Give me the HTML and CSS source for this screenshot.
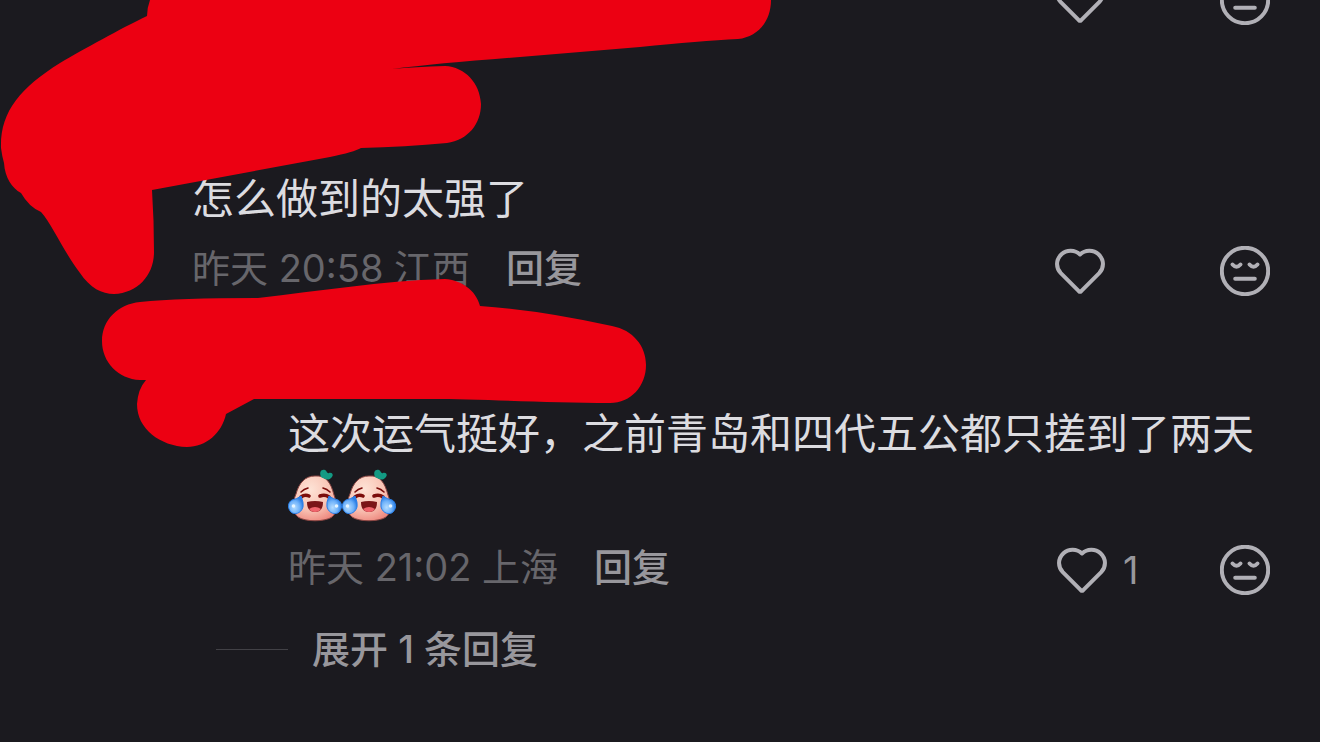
FILE: index.html
```
<!DOCTYPE html>
<html lang="zh-CN">
<head>
    <meta charset="UTF-8">
    <meta name="viewport" content="width=device-width, initial-scale=1.0">
    <title>评论</title>
    <link rel="stylesheet" href="styles.css">
</head>
<body>
    <!-- Iconos compartidos -->
    <svg class="sprite" aria-hidden="true">
        <defs>
            <radialGradient id="skin" cx="0.4" cy="0.3" r="0.75">
                <stop offset="0" stop-color="#fde3d6"/>
                <stop offset="0.6" stop-color="#f9c4b5"/>
                <stop offset="1" stop-color="#ee8a80"/>
            </radialGradient>
            <radialGradient id="tear" cx="0.4" cy="0.65" r="0.6">
                <stop offset="0" stop-color="#b4dcff"/>
                <stop offset="0.6" stop-color="#6fb2fa"/>
                <stop offset="1" stop-color="#2b7fe6"/>
            </radialGradient>
        </defs>
        <symbol id="heart" viewBox="0 0 50 50">
            <path d="M25 8.500C20 3.600 11.500 3.400 6.500 8.300C0.800 13.800 0.600 21.500 5.800 27.200L23.800 45.200Q25 46.300 26.200 45.200L44.200 27.200C49.400 21.500 49.200 13.800 43.500 8.300C38.500 3.400 30 3.600 25 8.500Z"/>
        </symbol>
        <symbol id="face" viewBox="0 0 50 50">
            <circle cx="25" cy="25" r="23.200"/>
            <path d="M12.500 18.500Q16.500 23 20.500 18.500M29.500 18.500Q33.500 23 37.500 18.500M15.200 32.700H34.800"/>
        </symbol>
        <symbol id="laugh" viewBox="0 0 54 54">
            <path fill="url(#skin)" stroke="#8a4542" d="M27 7C38 6 43 14 46 26C49 34 50 43 44 48C37 53 17 53 10 48C4 43 4 34 8 25C11 14 17 7 27 7Z"/>
            <path fill="#139a83" d="M33 8C31 3 33 0 37 1C39 2 39 5 41 4C45 3 46 7 43 9C40 12 37 10 33 8Z"/>
            <path fill="none" stroke="#7b0d0b" stroke-width="1.600" stroke-linecap="round" d="M13 23Q16 20 20 19M35 19Q39 20 42 23"/>
            <path fill="none" stroke="#7b0d0b" stroke-width="3.600" stroke-linecap="round" d="M13 28Q17 25 21 27M32 27Q37 25 41 28"/>
            <path fill="#7b1517" d="M19 33Q27 31 35 33Q35 43 27 43Q19 43 19 33Z"/>
            <path fill="#f0656c" d="M21 40Q27 36 33 40Q31 43 27 43Q23 43 21 40Z"/>
            <path fill="url(#tear)" stroke="#2b7fe6" d="M13 27Q16 34 15 38C13 45 6 46 3 43C-1 39 0 33 4 31Q9 30 13 27Z"/>
            <path fill="url(#tear)" stroke="#2b7fe6" d="M41 27Q38 34 39 38C41 45 48 46 51 43C55 39 54 33 50 31Q45 30 41 27Z"/>
            <circle cx="5.500" cy="37" r="1.800" fill="#e6f5ff"/>
            <circle cx="48.500" cy="37" r="1.800" fill="#e6f5ff"/>
        </symbol>
    </svg>

    <main class="comments">
        <article class="comment comment-first">
            <div class="meta">
                <div class="actions">
                    <button class="like" type="button" aria-label="赞"><svg class="icon"><use href="#heart"/></svg></button>
                    <button class="dislike" type="button" aria-label="踩"><svg class="icon"><use href="#face"/></svg></button>
                </div>
            </div>
        </article>

        <article class="comment">
            <p class="text">怎么做到的太强了</p>
            <div class="meta">
                <span class="info">昨天 20:58 江西</span>
                <button class="reply-button" type="button">回复</button>
                <div class="actions">
                    <button class="like" type="button" aria-label="赞"><svg class="icon"><use href="#heart"/></svg></button>
                    <button class="dislike" type="button" aria-label="踩"><svg class="icon"><use href="#face"/></svg></button>
                </div>
            </div>
        </article>

        <article class="comment comment-reply">
            <p class="text">这次运气挺好，之前青岛和四代五公都只搓到了两天<span class="emojis"><svg class="emoji"><use href="#laugh"/></svg><svg class="emoji"><use href="#laugh"/></svg></span></p>
            <div class="meta">
                <span class="info">昨天 21:02 上海</span>
                <button class="reply-button" type="button">回复</button>
                <div class="actions">
                    <button class="like like-counted" type="button" aria-label="赞 1"><svg class="icon"><use href="#heart"/></svg><span class="count">1</span></button>
                    <button class="dislike" type="button" aria-label="踩"><svg class="icon"><use href="#face"/></svg></button>
                </div>
            </div>
        </article>

        <button class="expand" type="button">展开 1 条回复</button>

        <!-- Trazos rojos que tapan los nombres y avatares -->
        <svg class="marker" width="800" height="460" aria-hidden="true">
            <path d="M150 0Q147 8 147 16C120 29 84 49 60 63C20 88 0 112 1 148Q2 156 4 163C5 178 12 188 21 193Q29 207 41 212C52 224 62 249 80 273C90 288 102 294 114 294C138 293 154 275 154 252Q154 220 152 190L330 157Q354 152 361 148Q405 147 447 143C468 140 481 124 481 104C480 83 465 67 445 66Q415 67 392 69Q440 63 520 57L640 47Q700 41 738 39C758 37 771 21 771 0Z"/>
            <path d="M146 380H140C118 379 102 362 102 341C102 320 118 304 140 302Q180 298 258 298C320 291 380 281 445 279C461 280 476 290 480 306Q540 310 612 326C633 330 646 346 646 365C646 386 631 403 610 403C550 403 480 399 430 399H254L226 414C222 433 206 447 187 447C160 446 137 429 137 404Q138 389 146 380Z"/>
        </svg>
    </main>
</body>
</html>
```

FILE: styles.css
```
* {
    box-sizing: border-box;
}
body {
    margin: 0;
    background: #1b1a1f;
    color: #dcdce0;
    font-family: Inter, "Noto Sans CJK SC", sans-serif;
}
button {
    padding: 0;
    border: 0;
    background: none;
    color: #98979c;
    font: inherit;
    cursor: pointer;
}
.sprite {
    position: absolute;
    width: 0;
    height: 0;
}
.comments {
    position: relative;
    overflow: hidden;
    padding-bottom: 60px;
}
.comment {
    padding: 0 50px 0 192px;
}
/* El primer comentario queda cortado por el borde superior */
.comment-first {
    margin-top: -28px;
    margin-bottom: 139px;
}
.comment-reply {
    margin-top: 103px;
    padding-left: 288px;
}
.text {
    margin: 0 -25px 12px 0;
    font-size: 42px;
    line-height: 64px;
}
.emojis {
    display: flex;
    align-items: center;
    height: 60px;
    margin-bottom: 16px;
}
.emoji {
    width: 54px;
    height: 54px;
}
.meta {
    display: flex;
    align-items: center;
    height: 56px;
    font-size: 38px;
    line-height: 50px;
}
.info,
.reply-button {
    padding-bottom: 6px;
}
.info {
    color: #67666b;
    word-spacing: normal;
}
.reply-button {
    margin-left: 36px;
    font-weight: 500;
}
.actions {
    display: flex;
    margin-left: auto;
}
.like {
    display: flex;
    align-items: center;
    gap: 16px;
    width: 165px;
}
.like-counted {
    width: 163px;
}
.dislike {
    display: flex;
    align-items: center;
}
.icon {
    width: 50px;
    height: 50px;
    fill: none;
    stroke: #b1b0b6;
    stroke-width: 4px;
    stroke-linecap: round;
    stroke-linejoin: round;
}
/* Botón para desplegar, con la línea a la izquierda */
.expand {
    display: flex;
    align-items: center;
    gap: 24px;
    margin: 23px 0 0 216px;
    font-size: 38px;
    font-weight: 500;
    line-height: 56px;
}
.expand::before {
    content: "";
    width: 72px;
    height: 1px;
    background: #424146;
}
.marker {
    position: absolute;
    top: 0;
    left: 0;
    fill: #ec0012;
    pointer-events: none;
}
```
